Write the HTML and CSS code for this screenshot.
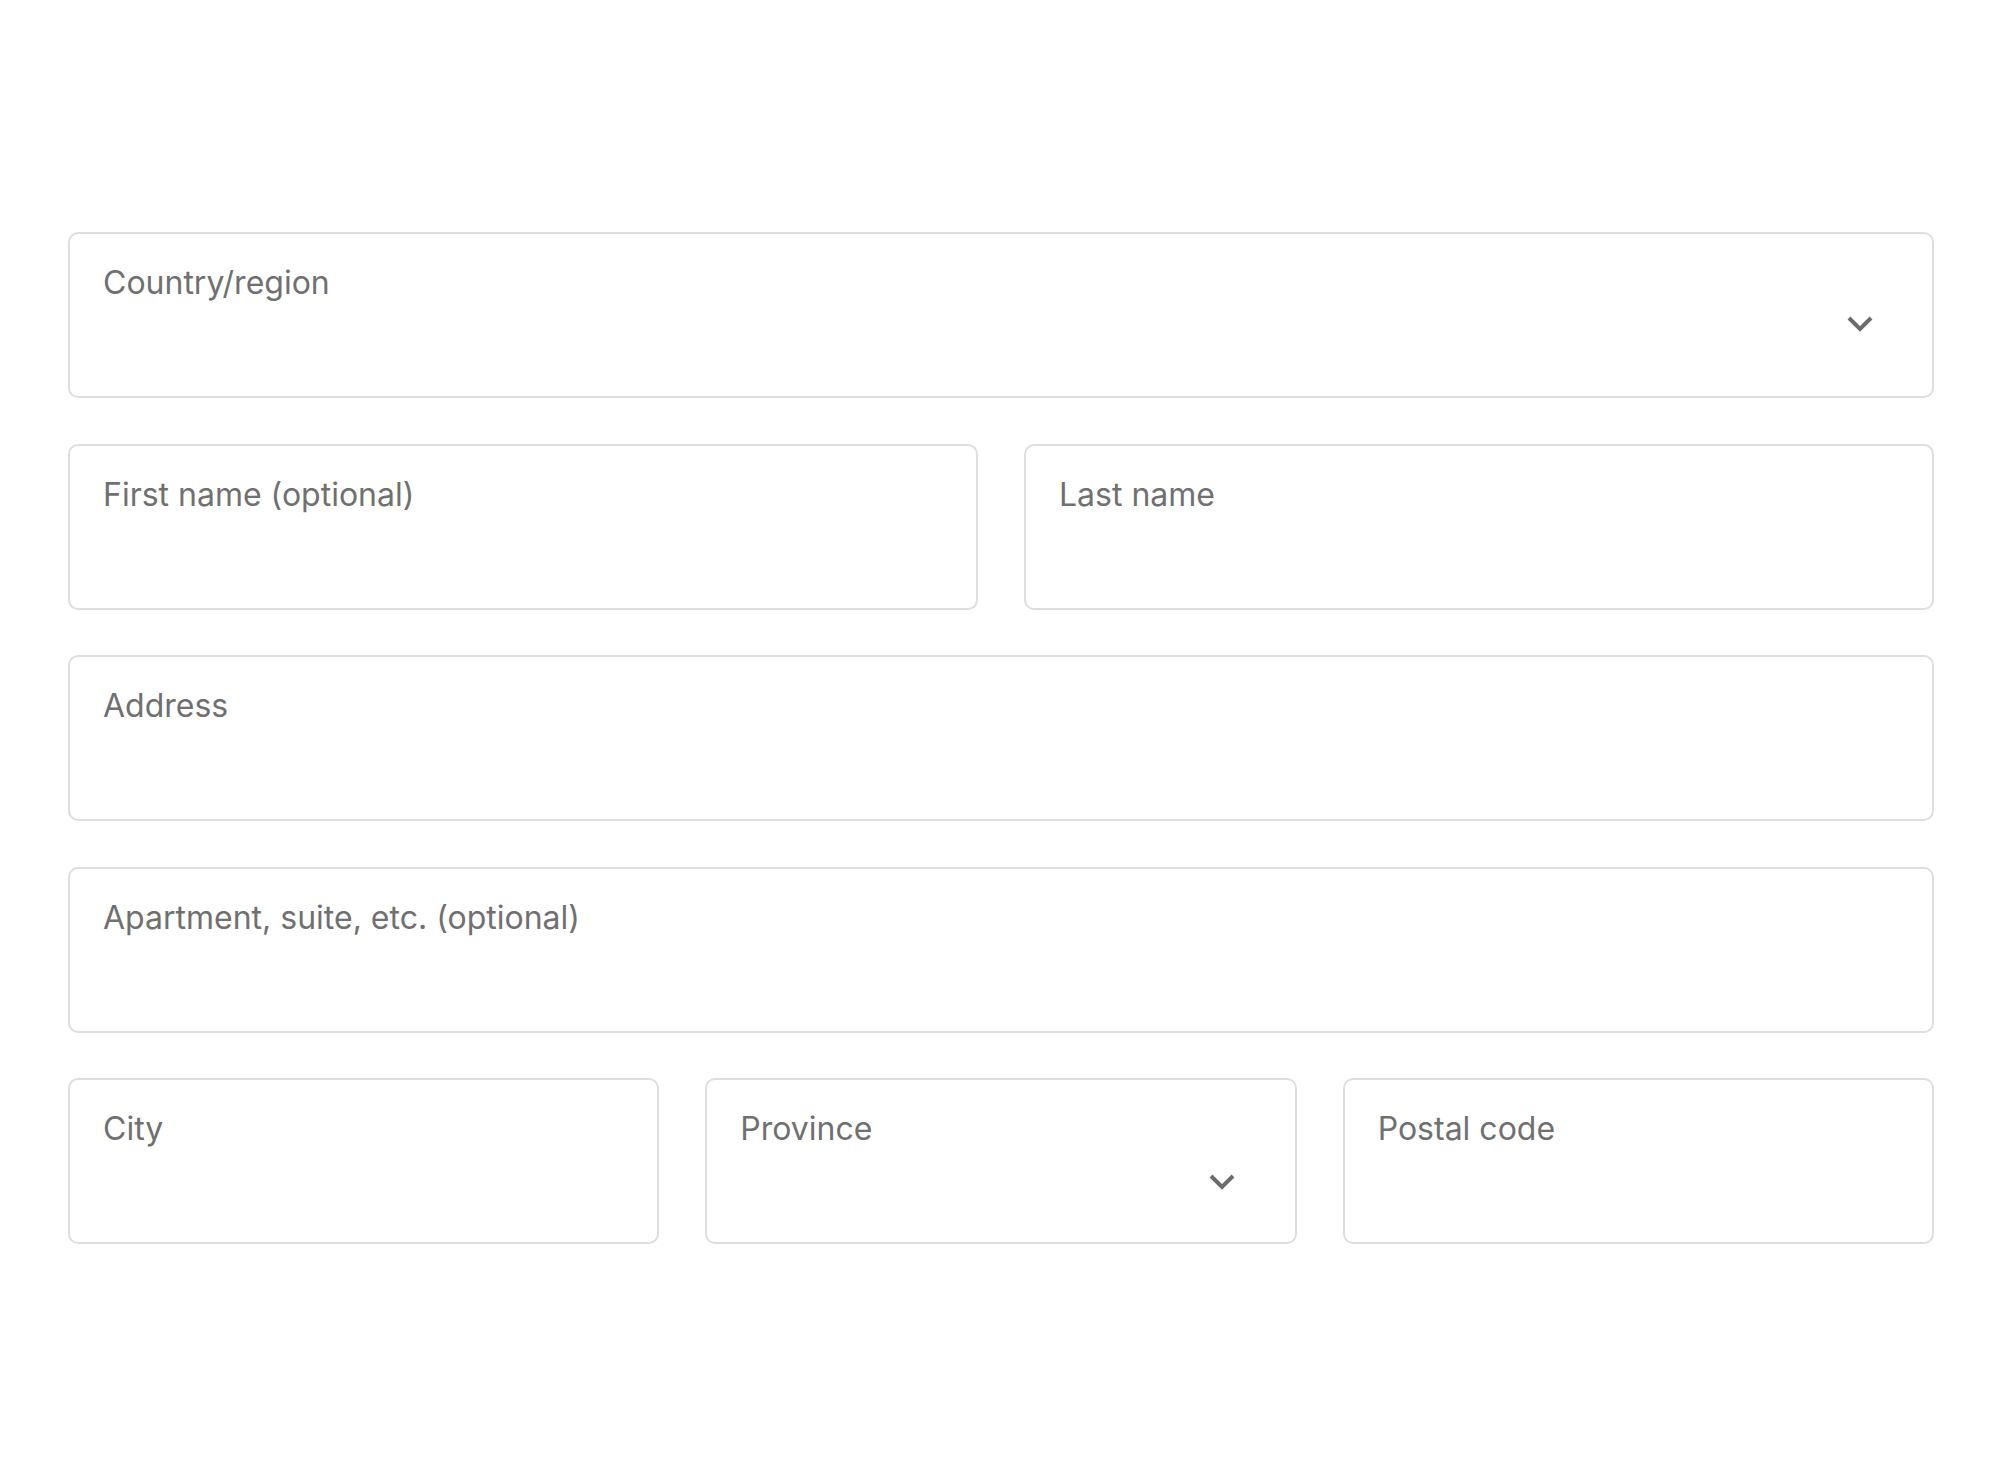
FILE: index.html
```html
<!DOCTYPE html>
<html lang="en">
<head>
<meta charset="utf-8">
<title>Address form</title>
<link rel="stylesheet" href="styles.css">
</head>
<body>
<form class="form">
  <div class="row">
    <div class="field select country">
      <span class="label">Country/region</span>
      <svg class="chevron" width="28" height="18" viewBox="0 0 28 18"><path d="M3 3 L14 14 L25 3" fill="none" stroke="#6b6b6b" stroke-width="4" stroke-linejoin="miter"/></svg>
    </div>
  </div>
  <div class="row two">
    <div class="field"><span class="label">First name (optional)</span></div>
    <div class="field"><span class="label">Last name</span></div>
  </div>
  <div class="row">
    <div class="field"><span class="label">Address</span></div>
  </div>
  <div class="row">
    <div class="field"><span class="label">Apartment, suite, etc. (optional)</span></div>
  </div>
  <div class="row three">
    <div class="field"><span class="label">City</span></div>
    <div class="field select province">
      <span class="label">Province</span>
      <svg class="chevron" width="28" height="18" viewBox="0 0 28 18"><path d="M3 3 L14 14 L25 3" fill="none" stroke="#6b6b6b" stroke-width="4" stroke-linejoin="miter"/></svg>
    </div>
    <div class="field"><span class="label">Postal code</span></div>
  </div>
</form>
</body>
</html>
```
FILE: styles.css
```css
html, body {
  margin: 0;
  padding: 0;
  background: #ffffff;
}
body {
  font-family: Inter, "Liberation Sans", sans-serif;
}
.form {
  display: flex;
  flex-direction: column;
  gap: 45.6px;
  padding: 232px 66px 0 68px;
}
.row {
  display: grid;
  grid-template-columns: 1fr;
  gap: 46px;
}
.row.two {
  grid-template-columns: 1fr 1fr;
}
.row.three {
  grid-template-columns: 1fr 1fr 1fr;
}
.field {
  position: relative;
  box-sizing: border-box;
  height: 166px;
  border: 2px solid #dedede;
  border-radius: 10px;
  padding: 29px 33px;
  background: #ffffff;
}
.label {
  display: block;
  font-size: 32px;
  line-height: 39px;
  color: #707070;
  letter-spacing: 0;
}
.chevron {
  position: absolute;
  right: 58px;
}
.country .chevron {
  top: 81px;
}
.province .chevron {
  top: 93px;
  right: 59px;
}
```
